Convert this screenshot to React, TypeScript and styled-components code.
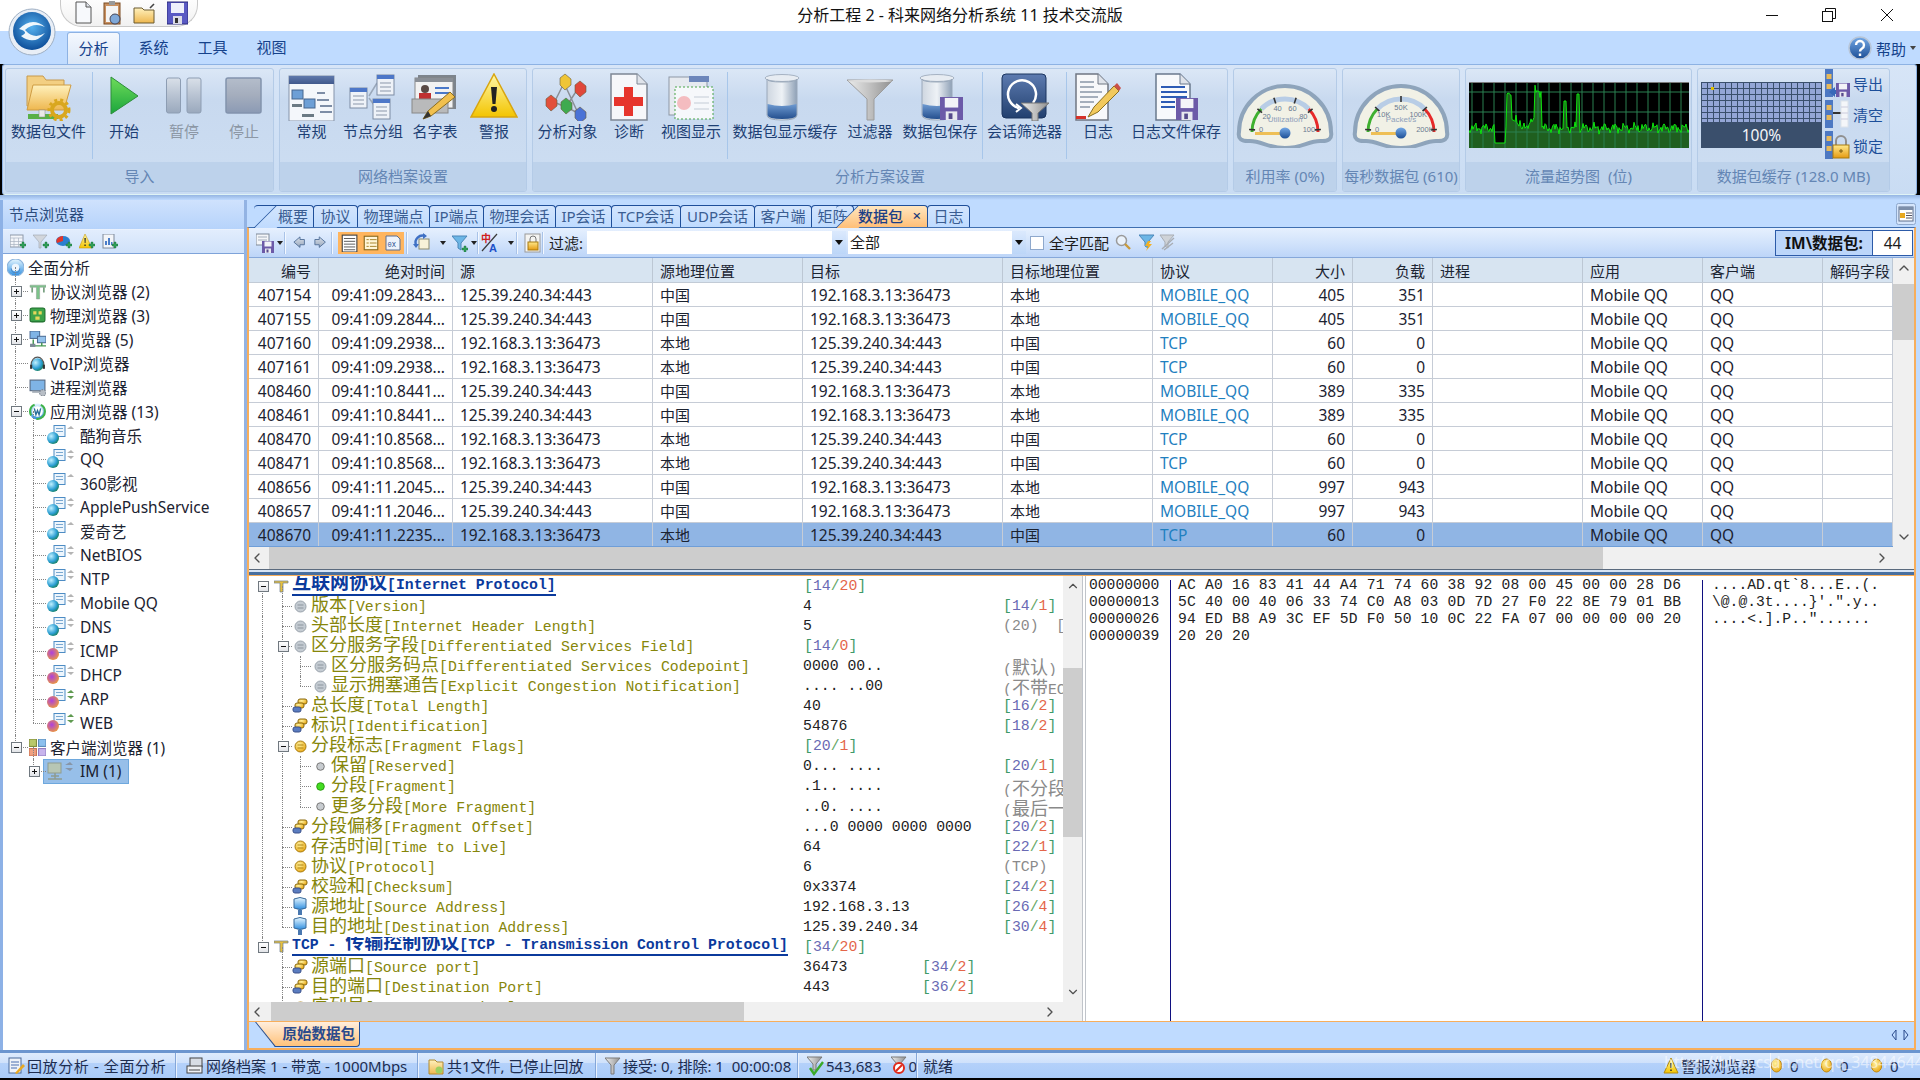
import React from 'react';
import styled, { createGlobalStyle } from 'styled-components';
import { ChevronLeft, ChevronRight, ChevronUp, ChevronDown } from 'lucide-react';

const GlobalStyle = createGlobalStyle`
  html, body { margin: 0; padding: 0; width: 1920px; height: 1080px; overflow: hidden; background: #000; }
  body { font-family: "Noto Sans", "Noto Sans CJK SC", sans-serif; font-size: 15px; color: #1c1c1c; }
  #root { width: 1920px; height: 1080px; }
  svg { display: block; flex: none; }
`;

/* ---------- shared svg gradients ---------- */
const HiddenDefs = styled.svg`position: absolute; width: 0; height: 0;`;
const Grad = ({ id, a, b, c, h }: { id: string; a: string; b: string; c?: string; h?: boolean }) => (
  <linearGradient id={id} x1="0" y1="0" x2={h ? '1' : '0'} y2={h ? '0' : '1'}>
    <stop offset="0" stopColor={a} />
    {c && <stop offset="0.5" stopColor={c} />}
    <stop offset="1" stopColor={b} />
  </linearGradient>
);
const SharedDefs = () => (
  <HiddenDefs>
    <defs>
      <Grad id="gFolder" a="#fff1bd" b="#eeb74f" />
      <Grad id="gGreen" a="#6fdc5a" b="#1aa53c" />
      <Grad id="gGray" a="#d9e0e9" b="#9aa9bd" c="#b8c3d2" />
      <Grad id="gStop" a="#b4bdcb" b="#8b9ab4" c="#a4adbd" />
      <Grad id="gBar" a="#5f79ac" b="#41598c" />
      <Grad id="gGlass" a="#ced6e0" b="#8ea0b6" c="#eef2f6" h />
      <Grad id="gWater" a="#6f9bd2" b="#244f8e" />
      <Grad id="gFunnel" a="#eceded" b="#8f8f8f" c="#c0c0c0" h />
      <Grad id="gGold" a="#ffe98a" b="#e59a12" />
      <Grad id="gWarn" a="#fff8a8" b="#f3c400" />
      <Grad id="gNavy" a="#5d7bb0" b="#22406f" />
      <Grad id="gSky" a="#e6f7ff" b="#2f8ee0" />
      <Grad id="gKnob" a="#73a8e6" b="#1d4f96" />
      <radialGradient id="gLogo" cx="0.5" cy="0.4" r="0.6">
        <stop offset="0" stopColor="#55b0ee" />
        <stop offset="1" stopColor="#0e4f9a" />
      </radialGradient>
      <radialGradient id="gGlobe" cx="0.35" cy="0.35" r="0.75">
        <stop offset="0" stopColor="#bff0ff" />
        <stop offset="0.6" stopColor="#2d9fd4" />
        <stop offset="1" stopColor="#137a4c" />
      </radialGradient>
      <radialGradient id="gPurple" cx="0.4" cy="0.4" r="0.7">
        <stop offset="0" stopColor="#ad3fe0" />
        <stop offset="1" stopColor="#f0a030" />
      </radialGradient>
      <radialGradient id="gCoin" cx="0.4" cy="0.35" r="0.7">
        <stop offset="0" stopColor="#fff3a0" />
        <stop offset="1" stopColor="#e8a510" />
      </radialGradient>
    </defs>
  </HiddenDefs>
);

type SP = { s?: number };
const Big = ({ children }: { children: React.ReactNode }) => (
  <svg width="48" height="48" viewBox="0 0 48 48">{children}</svg>
);

/* ---------- ribbon icons ---------- */
const Floppy = ({ x, y, s }: { x: number; y: number; s: number }) => (
  <g transform={`translate(${x} ${y}) scale(${s / 24})`}>
    <rect width="24" height="24" fill="#6c5aa8" />
    <rect x="5" y="1" width="14" height="10" fill="#f3f3f8" />
    <rect x="6" y="15" width="12" height="9" fill="#e8e8ef" />
    <rect x="9" y="17" width="4" height="6" fill="#564a8c" />
  </g>
);
const FolderGearIcon = () => (
  <Big>
    <path d="M2 3h16l3 4h18v26H2z" fill="#f3cf82" stroke="#c79a4c" />
    <path d="M8 12h38l-7 25H2z" fill="url(#gFolder)" stroke="#cf9c42" />
    <rect x="3" y="41" width="30" height="5" fill="#58b048" />
    <rect x="14" y="37" width="6" height="7" fill="#e9e9e9" stroke="#888" strokeWidth=".5" />
    <circle cx="34" cy="37" r="7" fill="none" stroke="#d9a71e" strokeWidth="4" />
    <circle cx="34" cy="37" r="10" fill="none" stroke="#d9a71e" strokeWidth="3" strokeDasharray="3 3" />
  </Big>
);
const PlayIcon = () => <Big><path d="M11 4L38 23L11 41Z" fill="url(#gGreen)" stroke="#2c8d3a" /></Big>;
const PauseIcon = () => (
  <Big>
    <rect x="6.5" y="5" width="14" height="35" rx="2" fill="url(#gGray)" stroke="#8d9db3" />
    <rect x="27" y="5" width="14" height="35" rx="2" fill="url(#gGray)" stroke="#8d9db3" />
  </Big>
);
const StopIcon = () => <Big><rect x="6" y="5" width="35" height="35" rx="2" fill="url(#gStop)" stroke="#8293ad" strokeWidth="1.5" /></Big>;
const GeneralIcon = () => (
  <Big>
    <rect x="1" y="3" width="45" height="45" fill="#f4f7fb" stroke="#8593aa" />
    <rect x="1" y="3" width="45" height="8" fill="url(#gBar)" />
    <rect x="4" y="17" width="11" height="9" fill="#6d9fd6" stroke="#47668f" />
    <rect x="16" y="26" width="11" height="9" fill="#6d9fd6" stroke="#47668f" />
    <rect x="4" y="31" width="10" height="3" fill="#6b7a84" />
    <rect x="14" y="41" width="12" height="3" fill="#6b7a84" />
    <path d="M29 20h8M29 27h12M32 33h12M32 39h12" stroke="#7d8da6" strokeWidth="2" />
  </Big>
);
const MiniWin = ({ x, y }: { x: number; y: number }) => (
  <g>
    <rect x={x} y={y} width="17" height="20" fill="#eef2f8" stroke="#7d8ca4" />
    <rect x={x} y={y} width="17" height="4" fill="#4d77c8" />
    <path d={`M${x + 3} ${y + 8}h11M${x + 3} ${y + 12}h11M${x + 3} ${y + 16}h11`} stroke="#8b97aa" />
  </g>
);
const NodeGroupIcon = () => (
  <Big>
    <path d="M20 23L28 10M20 25L28 36" stroke="#9aa8ba" strokeWidth="1.5" />
    <MiniWin x={1} y={15} />
    <MiniWin x={28} y={2} />
    <MiniWin x={24} y={26} />
  </Big>
);
const NameTableIcon = () => (
  <Big>
    <rect x="7" y="2" width="38" height="34" fill="#7d848c" />
    <rect x="4" y="5" width="38" height="30" fill="#f2f2f2" stroke="#888" />
    <rect x="4" y="5" width="38" height="4" fill="#8a8f96" />
    <circle cx="14" cy="16" r="4" fill="#5a4a44" />
    <rect x="8" y="20" width="12" height="9" fill="#c03030" />
    <path d="M24 15h14M24 20h14" stroke="#4a78c8" strokeWidth="2" />
    <rect x="1" y="26" width="36" height="14" fill="#b9babb" stroke="#888" />
    <path d="M12 46L17 38L39 19L44 24L20 43Z" fill="#f1c04e" stroke="#8a6d20" />
    <path d="M12 46l5-8 3 5z" fill="#333" />
  </Big>
);
const WarnIcon = () => (
  <Big>
    <path d="M24 1L47 44H1Z" fill="url(#gWarn)" stroke="#d8a510" strokeWidth="1.5" />
    <path d="M21 14h6l-1.5 17h-3z" fill="#222" />
    <circle cx="24" cy="36" r="3" fill="#222" />
  </Big>
);
const Gem = ({ x, y, c }: { x: number; y: number; c: string }) => (
  <path d={`M${x - 5} ${y - 4}L${x} ${y - 8}L${x + 6} ${y - 3}L${x + 6} ${y + 3}L${x} ${y + 8}L${x - 5} ${y + 3}Z`} fill={c} stroke="#6a5a3a" strokeWidth=".6" />
);
const AnalyzeIcon = () => (
  <Big>
    <path d="M20 10L10 30M20 10L34 40M35 14L22 34L12 30M22 34L34 40" stroke="#8a8f96" strokeWidth="1.5" fill="none" />
    <Gem x={21} y={9} c="#efc536" />
    <Gem x={36} y={16} c="#e0473a" />
    <Gem x={7} y={30} c="#e2503c" />
    <Gem x={22} y={33} c="#3faa4f" />
    <Gem x={36} y={42} c="#4a72d6" />
  </Big>
);
const DiagnoseIcon = () => (
  <Big>
    <path d="M6 1h26l10 10v36H6z" fill="#f6f7fa" stroke="#7e8794" strokeWidth="1.5" />
    <path d="M32 1v10h10" fill="#dfe3ea" stroke="#7e8794" />
    <path d="M19 14h9v10h10v9H28v10h-9V33H9v-9h10z" fill="#e6352d" />
  </Big>
);
const ViewIcon = () => (
  <Big>
    <rect x="2" y="4" width="38" height="38" fill="#e6eaf0" stroke="#8d97a5" />
    <rect x="22" y="3" width="20" height="6" fill="#6c86bb" />
    <rect x="8" y="14" width="38" height="32" fill="#f6f8fb" stroke="#48a448" strokeDasharray="2 2" />
    <circle cx="17" cy="30" r="7" fill="#f4bcc0" />
    <path d="M27 24h15M27 30h15M27 36h15" stroke="#c4ccd6" />
  </Big>
);
const BeakerIcon = ({ save }: { save?: boolean }) => (
  <Big>
    <ellipse cx="21" cy="5" rx="17" ry="3.5" fill="#e7ecf2" stroke="#a6b3c3" />
    <path d="M6 6V42Q6 47 21 47T36 42V6Q36 9 21 9T6 6" fill="url(#gGlass)" stroke="#9aa8ba" />
    <path d="M6.5 31Q21 35 35.5 31V42Q35 46 21 46T6.5 42Z" fill="url(#gWater)" />
    {save && <Floppy x={24} y={24} s={23} />}
  </Big>
);
const FunnelIcon = () => (
  <Big>
    <path d="M1 7H47L28 26V47H21V26Z" fill="url(#gFunnel)" stroke="#9c9c9c" />
    <ellipse cx="24" cy="8" rx="22" ry="1.5" fill="#dcdcdc" />
  </Big>
);
const SessionIcon = () => (
  <Big>
    <rect x="1" y="1" width="44" height="44" rx="4" fill="url(#gNavy)" stroke="#1a345f" />
    <path d="M32 30A14 14 0 1 0 18 35" fill="none" stroke="#fff" strokeWidth="2.5" />
    <path d="M15 31l5 4-5 4" fill="none" stroke="#fff" strokeWidth="2" />
    <path d="M20 30H48L37 40V48H31V40Z" fill="url(#gFunnel)" stroke="#777" />
  </Big>
);
const LogIcon = () => (
  <Big>
    <path d="M2 1h22l10 10v36H2z" fill="#f7f8fa" stroke="#6f7682" strokeWidth="1.5" />
    <path d="M24 1v10h10" fill="#dfe3ea" stroke="#6f7682" />
    <path d="M6 9h14M6 14h14M6 19h22M6 24h18M6 29h14M6 34h10" stroke="#8a97a8" strokeWidth="1.6" />
    <rect x="2" y="43" width="10" height="3" fill="#d6322a" />
    <path d="M14 44L20 34L40 13L45 18L24 39Z" fill="#f2c95c" stroke="#8a7020" />
    <path d="M40 13l5 5 2-3-4-5z" fill="#c9504a" />
  </Big>
);
const LogSaveIcon = () => (
  <Big>
    <path d="M4 1h24l10 10v36H4z" fill="#f7f9fc" stroke="#69788d" strokeWidth="1.5" />
    <path d="M28 1v10h10" fill="#dfe3ea" stroke="#69788d" />
    <path d="M9 14h24M9 19h26M9 24h26M9 29h14M9 34h14" stroke="#2d5bb5" strokeWidth="2" />
    <Floppy x={24} y={25} s={22} />
  </Big>
);

/* ---------- small icons ---------- */
const Sm = ({ s = 16, children }: SP & { children: React.ReactNode }) => (
  <svg width={s} height={s} viewBox="0 0 16 16">{children}</svg>
);
const Plus = () => <path d="M10 10h2V8h2v2h2v2h-2v2h-2v-2h-2z" fill="#2f9e58" stroke="#1b6a3a" strokeWidth=".4" />;
const TableAddIcon = () => <Sm><rect x="0" y="1" width="13" height="12" fill="#f4f6fa" stroke="#8c97a8" /><path d="M0 4h13M0 7.5h13M0 10.5h13M4 4v9M8.5 4v9" stroke="#a8b2c0" strokeWidth=".7" /><Plus /></Sm>;
const FilterAddIcon = () => <Sm><path d="M0 1H14L8 8V14H6V8Z" fill="#d2d6dc" stroke="#9aa2ac" strokeWidth=".6" /><Plus /></Sm>;
const PieAddIcon = () => <Sm><ellipse cx="7" cy="7" rx="7" ry="5" fill="#2b7fd0" /><path d="M7 7V2A7 5 0 0 0 1 9Z" fill="#e2352a" /><Plus /></Sm>;
const WarnAddIcon = () => <Sm><path d="M6 0L13 14H0Z" fill="url(#gWarn)" stroke="#c79a10" strokeWidth=".6" /><path d="M5.4 4h1.4l-.3 5h-.8zM5.4 10.5h1.3v1.5H5.4z" fill="#222" /><Plus /></Sm>;
const ReportAddIcon = () => <Sm><rect x="1" y="0" width="11" height="14" fill="#f3f5f9" stroke="#7e8a9c" /><path d="M3 11V7h2v4zM6 11V4h2v7zM9 11V8h1.5v3z" fill="#4a7cc8" /><Plus /></Sm>;

const SaveMenuIcon = () => <svg width="18" height="20" viewBox="0 0 18 20"><rect x="0" y="1" width="13" height="11" fill="#f4f6f9" stroke="#7f8a99" /><path d="M2 4h9M2 7h9" stroke="#a3adba" /><Floppy x={6} y={8} s={12} /></svg>;
const ArrowLeftIcon = () => <Sm s={14}><path d="M1 7L8 1v3h5v6H8v3z" fill="url(#gGray)" stroke="#4d6b95" /></Sm>;
const ArrowRightIcon = () => <Sm s={14}><path d="M13 7L6 1v3H1v6h5v3z" fill="url(#gGray)" stroke="#4d6b95" /></Sm>;
const ListViewIcon = () => <Sm s={18}><rect x="2" y="1" width="13" height="15" fill="#fff" stroke="#444" /><path d="M3.5 4h10M3.5 6.5h10M3.5 9h10M3.5 11.5h10M3.5 14h10" stroke="#333" strokeWidth=".7" /></Sm>;
const DetailViewIcon = () => <Sm s={18}><rect x="2" y="2" width="12" height="12" fill="#fff6d8" stroke="#8a6a20" /><path d="M7 5h6M7 8h6M7 11h6M4 5h2M4 8h2M4 11h2" stroke="#a07c20" strokeWidth=".8" /></Sm>;
const HexViewIcon = () => <svg width="18" height="18" viewBox="0 0 18 18"><path d="M2 2h11l3 3v11H2z" fill="#eef3fb" stroke="#5a6f92" /><text x="3.5" y="12.5" fontSize="7" fontFamily="Liberation Mono" fill="#2a4f90">0X</text></svg>;
const SwapIcon = () => <svg width="20" height="20" viewBox="0 0 20 20"><rect x="6" y="6" width="10" height="10" fill="#f8f2d8" stroke="#8a8a70" /><path d="M3 12A7 7 0 0 1 12 3" stroke="#3f70c4" strokeWidth="2.4" fill="none" /><path d="M10 0l4 3-4 3zM0 11l3 4 3-4z" fill="#3f70c4" /></svg>;
const FilterBlueIcon = () => <svg width="16" height="18" viewBox="0 0 16 18"><path d="M0 2H15L9 9V16L6 14V9Z" fill="#6cb6e6" stroke="#4a86b8" /><g transform="translate(0 4)"><Plus /></g></svg>;
const LangIcon = () => <svg width="20" height="20" viewBox="0 0 20 20"><path d="M2 18L17 1" stroke="#3a3a3a" strokeWidth="1.2" /><text x="1" y="9" fontSize="10" fontWeight="700" fill="#d02020" fontFamily="Noto Sans CJK SC">中</text><text x="9" y="19" fontSize="11" fontWeight="700" fill="#2050c8" fontFamily="Liberation Sans">A</text></svg>;
const LockIcon = () => <svg width="18" height="20" viewBox="0 0 18 20"><rect x="1" y="1" width="15" height="18" fill="#f4f4f2" stroke="#9a9a9a" /><path d="M6 9V6a3 3 0 0 1 6 0v3" fill="none" stroke="#777" /><rect x="4" y="9" width="10" height="8" fill="url(#gGold)" stroke="#a87a10" /></svg>;
const SearchIcon = () => <svg width="17" height="17" viewBox="0 0 17 17"><circle cx="6.5" cy="6.5" r="5" fill="#eaf2fb" stroke="#9a9a9a" strokeWidth="1.5" /><path d="M10 10l5 5" stroke="#c99a3a" strokeWidth="2.4" /></svg>;
const FilterBoltIcon = () => <svg width="16" height="17" viewBox="0 0 16 17"><path d="M0 1H15L9 8V14L6 12V8Z" fill="#6cb6e6" stroke="#4a86b8" /><path d="M9 7L6 12h3l-2 5 6-7h-3l2-3z" fill="#f2b024" /></svg>;
const FilterOffIcon = () => <svg width="16" height="17" viewBox="0 0 16 17"><path d="M1 1H15L9 8V14L6 12V8Z" fill="#cfd3d8" stroke="#a8adb4" /><path d="M3 15L15 4M5 16l9-7" stroke="#a8adb4" strokeWidth="1.4" /></svg>;
const PanelIcon = () => <svg width="20" height="22" viewBox="0 0 20 22"><rect x=".5" y=".5" width="19" height="21" rx="2" fill="#d5e5fb" stroke="#8ea8cc" /><rect x="3" y="4" width="14" height="14" fill="#fff" stroke="#5d6f8c" /><rect x="3" y="4" width="14" height="3" fill="#7d8faa" /><rect x="4" y="10" width="5" height="5" fill="#e8a820" /><path d="M10 10h6M10 12.5h6M10 15h6" stroke="#556" /></svg>;
const ExportIcon = ({ v }: { v: 'export' | 'clear' | 'lock' }) => (
  <svg width="25" height="30" viewBox="0 0 25 30">
    <rect x="0" y="1" width="8" height="28" fill="#4d78c2" />
    <rect x="1.5" y="6" width="5" height="5" fill="#e6b85a" />
    <rect x="1.5" y="16" width="5" height="5" fill="#e6b85a" />
    {v === 'export' && <><path d="M4 24l6-5v3h4v4h-4v3z" fill="#3868b8" /><Floppy x={11} y={15} s={14} /></>}
    {v === 'clear' && <><path d="M8 14h8" stroke="#333" strokeWidth="2" /><rect x="16" y="2" width="7" height="26" fill="#f4f6f9" stroke="#dde3ea" /><path d="M16 8h7M16 14h7M16 20h7" stroke="#ccd" /></>}
    {v === 'lock' && <><path d="M11 15v-4a5 5 0 0 1 10 0v4" fill="none" stroke="#909090" strokeWidth="2" /><rect x="8" y="15" width="16" height="13" fill="url(#gGold)" stroke="#a87a10" /><path d="M14 21h4M16 19v4" stroke="#7a5a10" /></>}
  </svg>
);

/* ---------- tree icons ---------- */
const ProtoTreeIcon = () => <Sm s={17}><path d="M1 2h15v2H10v11H7V4H1z" fill="#7cc48a" stroke="#8e9c92" strokeWidth=".5" /><path d="M3 4v5M14 4v5" stroke="#78a080" strokeWidth="1.6" /></Sm>;
const PhysTreeIcon = () => <Sm s={17}><rect x="1" y="1" width="14" height="13" rx="2" fill="#3da24a" stroke="#1e6e2c" /><path d="M4 4h3v3H4zM9 4h3v3H9zM6 9h4v3H6z" fill="#e6d65a" /></Sm>;
const IPTreeIcon = () => <Sm s={17}><rect x="1" y="0" width="9" height="7" fill="#7fb4e6" stroke="#4d6e98" /><rect x="8" y="5" width="8" height="6" fill="#94c2ec" stroke="#4d6e98" /><path d="M1 14h15M4 8v6M12 11v3" stroke="#4a9a56" strokeWidth="1.4" /><rect x="1" y="12" width="5" height="3" fill="#7d8a96" /></Sm>;
const VoipTreeIcon = () => <Sm s={17}><circle cx="8" cy="9" r="6" fill="url(#gGlobe)" /><path d="M2 9a6 7 0 0 1 12 0" fill="none" stroke="#555" /><rect x="1" y="9" width="2" height="4" fill="#333" /><rect x="13" y="9" width="2" height="4" fill="#333" /></Sm>;
const ProcTreeIcon = () => <Sm s={17}><rect x="1" y="1" width="14" height="10" fill="#7fb4e6" stroke="#55677f" /><rect x="3" y="11" width="8" height="2" fill="#a3acb6" /><circle cx="13" cy="13" r="3" fill="#b8bec6" stroke="#7e8792" strokeDasharray="1.5 1" /></Sm>;
const AppRootIcon = () => <Sm s={17}><circle cx="8" cy="8" r="7.5" fill="url(#gSky)" /><circle cx="8" cy="8" r="5" fill="#fff" /><circle cx="8" cy="8" r="7" fill="none" stroke="#3fb24a" strokeWidth="2" strokeDasharray="12 6" /><path d="M5 5l1.5 6L8 7l1.5 4L11 5" fill="none" stroke="#2a6d9a" strokeWidth="1.3" /></Sm>;
const RootIcon = () => <Sm s={17}><circle cx="8" cy="8" r="8" fill="url(#gSky)" stroke="#8db4dc" /><circle cx="8" cy="8" r="3.5" fill="#eef6fd" /><path d="M4 9a4 4 0 0 0 8 0" fill="none" stroke="#4a88c8" /></Sm>;
const AppNodeIcon = ({ purple, green, faded }: { purple?: boolean; green?: boolean; faded?: boolean }) => (
  <svg width="28" height="20" viewBox="0 0 28 20">
    <rect x="7" y="0.5" width="11" height="11" fill="#eef6fd" stroke="#4d8cc4" />
    <path d="M9 3.5h7M9 6.5h7" stroke="#7aa8d0" />
    <circle cx="6" cy="13" r="6" fill={purple ? 'url(#gPurple)' : 'url(#gGlobe)'} />
    <path d="M20 4h7l-3-3z" fill={green ? '#5f9a50' : '#b4b4b4'} />
    {!faded && <path d="M20 7h7l-3 3z" fill={green ? '#5f9a50' : '#b4b4b4'} />}
  </svg>
);
const ClientTreeIcon = () => <Sm s={17}><rect x="0" y="0" width="7" height="7" fill="#b9c86a" stroke="#7f8a3a" /><rect x="9" y="0" width="7" height="7" fill="#8cc0ee" stroke="#5a8ab8" /><rect x="0" y="9" width="7" height="7" fill="#f0a080" stroke="#c87050" /><rect x="9" y="9" width="7" height="7" fill="#c8b4ec" stroke="#8f7cc0" /></Sm>;
const IMTreeIcon = () => (
  <svg width="28" height="20" viewBox="0 0 28 20">
    <rect x="1" y="2" width="13" height="10" fill="#b7c6b4" stroke="#8f9c8f" />
    <path d="M4 15h8M1 18h14M8 12v6" stroke="#8f9c8f" strokeWidth="1.5" />
    <path d="M18 4h8l-3-3zM18 7h8l-3 3z" fill="#8795a8" />
  </svg>
);

/* ---------- detail icons ---------- */
const TreeTIcon = () => <svg width="15" height="15" viewBox="0 0 15 15"><path d="M0 2h14v2H9v9H6V4H0z" fill="#e6c040" stroke="#6a7c8e" strokeWidth=".7" /></svg>;
const DocCoinIcon = () => <svg width="13" height="13" viewBox="0 0 13 13"><circle cx="6.5" cy="6.5" r="5.5" fill="#c4cbd2" stroke="#9aa3ac" /><path d="M3.5 5h6M3.5 8h6" stroke="#8c959e" /></svg>;
const GoldCoinIcon = () => <svg width="13" height="13" viewBox="0 0 13 13"><circle cx="6.5" cy="6.5" r="5.5" fill="url(#gCoin)" stroke="#a87c10" /><path d="M3.5 5h6M3.5 8h6" stroke="#b08410" /></svg>;
const CoinStackIcon = () => <svg width="16" height="16" viewBox="0 0 16 16"><rect x="6" y="1" width="9" height="5" rx="2" fill="url(#gCoin)" stroke="#8a6a10" /><rect x="3" y="5" width="9" height="5" rx="2" fill="url(#gCoin)" stroke="#8a6a10" /><rect x="1" y="9" width="8" height="5" rx="2" fill="#5a7cc0" stroke="#3a508a" /></svg>;
const BitIcon = ({ on }: { on?: boolean }) => <svg width="9" height="9" viewBox="0 0 9 9"><circle cx="4.5" cy="4.5" r="3.8" fill={on ? '#44dd22' : '#c8ccd0'} stroke={on ? '#2a9a10' : '#777'} /></svg>;
const AddrIcon = () => <svg width="14" height="20" viewBox="0 0 14 20"><path d="M1 2Q7-1 13 2V11Q7 14 1 11Z" fill="url(#gSky)" stroke="#3a6a9a" /><path d="M5 13h4v5H5z" fill="#4a78b0" /></svg>;

/* ---------- window / ribbon ---------- */
const Frame = styled.div`
  position: relative; width: 1920px; height: 1080px; overflow: hidden;
  display: flex; flex-direction: column; background: #000;
`;
const TitleBar = styled.div`
  height: 31px; background: #fff; display: grid; grid-template-columns: 1fr auto 1fr; align-items: start;
`;
const QuickBar = styled.div`
  margin-left: 60px; width: 138px; height: 27px; box-sizing: border-box; padding-left: 12px;
  display: flex; align-items: center; gap: 10px; background: linear-gradient(#fdfdfd, #f1f1f1);
  border: 1px solid #c9c9c9; border-top: 0; border-radius: 0 0 22px 22px;
`;
const TitleText = styled.div`font-size: 16px; line-height: 31px; color: #111;`;
const WinButtons = styled.div`display: flex; justify-content: flex-end; padding: 8px 26px 0 0; gap: 44px;`;
const LogoWrap = styled.div`position: absolute; left: 8px; top: 8px; z-index: 5;`;

const MenuBar = styled.div`
  height: 33px; padding-left: 67px; display: flex; align-items: flex-end; background: #bfdbff; position: relative;
`;
const MenuTab = styled.div<{ $active?: boolean }>`
  width: ${p => (p.$active ? '53px' : '59px')};
  margin-right: ${p => (p.$active ? '4px' : '0')};
  height: 32px; line-height: 31px; text-align: center; color: #15428b; font-size: 15px; box-sizing: border-box;
  ${p => p.$active && `background: linear-gradient(#f4f8fe, #dbe7f7); border: 1px solid #8db2e3; border-bottom: 0; border-radius: 3px 3px 0 0;`}
`;
const HelpBox = styled.div`
  margin-left: auto; display: flex; align-items: center; gap: 4px; padding-right: 4px; height: 32px;
  color: #15428b; font-size: 15px;
`;
const Caret = styled.span`
  width: 0; height: 0; border: 3px solid transparent; border-top: 4px solid #444; border-bottom: 0; display: block;
`;

const Ribbon = styled.div`
  height: 131px; box-sizing: border-box; margin: 0 3px 0 2px; padding: 3px 0 0 2px; display: flex; gap: 5px;
  background: linear-gradient(#d7e5f7, #c9dcf3); border: 1px solid #8db2e3; border-bottom-color: #dff3f5; border-radius: 3px;
`;
const RGroup = styled.div<{ $w: number }>`
  width: ${p => p.$w}px; height: 124px; box-sizing: border-box; flex: none; display: flex; flex-direction: column;
  border: 1px solid #b4cbe7; border-radius: 3px; overflow: hidden;
  background: linear-gradient(#dbe7f6 0, #c8d9ef 25%, #cddef2 100%);
`;
const RBody = styled.div`flex: 1; display: flex; min-height: 0;`;
const RLabel = styled.div`
  height: 29px; line-height: 28px; text-align: center; color: #6486b4; font-size: 15px; white-space: nowrap; background: #bdd2eb;
`;
const RItem = styled.div<{ $w: number }>`
  width: ${p => p.$w}px; flex: none; display: flex; flex-direction: column; align-items: center; padding-top: 4px;
`;
const RText = styled.div<{ $off?: boolean }>`
  margin-top: 1px; line-height: 18px; white-space: nowrap; font-size: 15px; color: ${p => (p.$off ? '#8c97a5' : '#1d3f74')};
`;
const RSep = styled.div`width: 1px; margin: 3px 1px 3px; background: #a7c6ea; flex: none;`;
const GaugeBox = styled.div`flex: 1; display: flex; align-items: flex-start; justify-content: center; padding-top: 13px;`;
const ChartBox = styled.div`padding: 13px 0 0 3px;`;
const BufferBody = styled.div`display: flex; padding: 13px 0 0 3px;`;
const BufferMap = styled.div`
  position: relative; width: 121px; height: 66px; background: #3a4f6c; overflow: hidden; flex: none;
  &::before {
    content: ''; display: block; height: 40px;
    background-image: linear-gradient(#3a4f6c 1px, transparent 1px), linear-gradient(90deg, #3a4f6c 1px, transparent 1px);
    background-size: 6px 6px; background-color: #94a6d6;
  }
  &::after { content: ''; position: absolute; left: 10px; top: 5px; width: 3px; height: 3px; background: #e0c000; }
`;
const BufferPct = styled.div`height: 26px; line-height: 26px; text-align: center; color: #f4f6fa; font-size: 15.5px;`;
const SideBtns = styled.div`display: flex; flex-direction: column; margin: -14px 0 0 3px; gap: 1px;`;
const SideBtn = styled.div`display: flex; align-items: center; gap: 3px; height: 30px; color: #1d4f9a; font-size: 15px;`;

/* ---------- body ---------- */
const Body = styled.div`
  height: 858px; box-sizing: border-box; display: flex; background: linear-gradient(#95b5e2, #bfdbff 5px);
  padding-top: 5px; border-bottom: 3px solid #6b95cf;
`;
const LeftPane = styled.div`
  width: 244px; flex: none; box-sizing: border-box; border-left: 3px solid #8db1e6; display: flex; flex-direction: column;
`;
const PaneHead = styled.div`
  height: 29px; line-height: 29px; padding-left: 6px; color: #2b4b7c; font-size: 15px;
  background: linear-gradient(#cfe2fd, #b6d3fb);
`;
const PaneTools = styled.div`
  height: 25px; box-sizing: border-box; display: flex; align-items: center; gap: 7px; padding-left: 7px;
  background: linear-gradient(#e2edfd, #cfe1fa); border-top: 1px solid #eaf2fe; border-bottom: 1px solid #7ea3d9;
`;
const Tree = styled.div`flex: 1; background: #fff; padding-top: 1px; overflow: hidden;`;
const TreeRow = styled.div<{ $pad: number }>`
  position: relative; height: 24px; padding-left: ${p => p.$pad}px; display: flex; align-items: center;
  font-size: 15.5px; color: #1b2230; white-space: nowrap;
`;
const Rail = styled.i<{ $x: number; $part?: 'top' | 'bottom' }>`
  position: absolute; left: ${p => p.$x}px; width: 0; border-left: 1px dotted #858585;
  top: ${p => (p.$part === 'bottom' ? '50%' : '0')}; height: ${p => (p.$part ? '50%' : '100%')};
`;
const Hook = styled.i<{ $x: number; $w: number }>`
  position: absolute; left: ${p => p.$x}px; width: ${p => p.$w}px; top: 50%; height: 0; border-top: 1px dotted #858585;
`;
const Expander = styled.i<{ $x: number; $open?: boolean }>`
  position: absolute; left: ${p => p.$x - 4}px; top: calc(50% - 5px); width: 9px; height: 9px; background: linear-gradient(#fff, #e2e4e8);
  border: 1px solid #70787f; box-sizing: content-box; z-index: 1;
  &::before { content: ''; position: absolute; left: 2px; right: 2px; top: 4px; height: 1px; background: #111; }
  ${p => !p.$open && `&::after { content: ''; position: absolute; top: 2px; bottom: 2px; left: 4px; width: 1px; background: #111; }`}
`;
const TreeIconSlot = styled.span<{ $w: number }>`width: ${p => p.$w}px; flex: none; display: flex; align-items: center;`;
const TreeSelected = styled.span`
  display: flex; align-items: center; height: 25px; padding: 0 6px 0 3px; margin-left: -4px;
  background: #97bfe9; border: 1px solid #6ea8dd; box-sizing: border-box;
`;
const VSplit = styled.div`width: 3px; background: #93b3e3; flex: none;`;
const RightPane = styled.div`flex: 1; min-width: 0; padding-right: 4px; display: flex; flex-direction: column;`;
const TabStrip = styled.div`height: 27px; flex: none; box-sizing: border-box; padding: 5px 0 0 7px; display: flex; position: relative;`;
const ViewTab = styled.div<{ $w: number; $slant?: boolean; $active?: boolean }>`
  position: relative; flex: none; width: ${p => p.$w}px; height: 22px; line-height: 20px; box-sizing: border-box;
  font-size: 15px; font-weight: ${p => (p.$active ? 500 : 400)}; color: ${p => (p.$active ? '#1c3f86' : '#3a5d92')};
  text-align: ${p => (p.$slant ? 'right' : 'center')}; white-space: nowrap; overflow: ${p => (p.$slant ? 'visible' : 'hidden')};
  padding-right: ${p => (p.$active ? '24px' : p.$slant ? '5px' : '0')};
  background: ${p => (p.$active ? 'linear-gradient(#ffe6bf, #ffbf78)' : 'linear-gradient(#d3e5fd, #bfdbff)')};
  border: 1px solid #1f4f9a; border-bottom: 0; border-radius: 4px 4px 0 0;
  z-index: ${p => (p.$active ? 2 : 1)};
  margin-left: ${p => (p.$active ? '-18px' : p.$slant ? '0' : '-1px')};
  ${p => p.$slant && `
    border-left: 0; background-position: right; background-size: calc(100% - 22px) 100%; background-repeat: no-repeat;
    &::before {
      content: ''; position: absolute; left: 11px; top: -1px; width: 22px; height: 22px;
      background: ${p.$active ? 'linear-gradient(#ffe6bf, #ffbf78)' : 'linear-gradient(#d3e5fd, #bfdbff)'};
      border-left: 1px solid #1f4f9a; border-top: 1px solid #1f4f9a;
      transform: skewX(-45deg); z-index: -1;
    }
  `}
`;
const TabClose = styled.span`position: absolute; right: 6px; top: -1px; font-size: 15px; color: #1a3a7a;`;
const StripEnd = styled.div`position: absolute; right: 0; top: 3px;`;
const Panel = styled.div`
  height: 823px; flex: none; box-sizing: border-box; display: flex; flex-direction: column; background: #fff;
  border: 2px solid #f7ae5c; border-top: 1px solid #3f6fb0;
`;
const Toolbar = styled.div`
  height: 30px; flex: none; box-sizing: border-box; display: flex; align-items: center; position: relative;
  background: linear-gradient(#e6f0fe, #d0e2fb 55%, #bdd5f8); border-bottom: 1px solid #86a8da;
`;
const Tool = styled.span<{ $ml: number }>`margin-left: ${p => p.$ml}px; flex: none; display: flex; align-items: center;`;
const ToolSep = styled.span<{ $ml: number }>`margin-left: ${p => p.$ml}px; width: 1px; height: 22px; background: #f3f8ff; box-shadow: -1px 0 #a9c3e8; flex: none;`;
const OrangeGroup = styled.span`
  margin-left: 5px; width: 66px; height: 22px; display: flex; justify-content: space-around; align-items: center; background: #ffb55e; flex: none;
`;
const ToolCaret = styled(Caret)`margin-left: 3px; border-top-color: #222; border-width: 3px; border-top-width: 4px;`;
const FilterLabel = styled.span`margin-left: 5px; font-size: 15px; width: 38px; flex: none;`;
const Combo = styled.div<{ $w: number }>`
  width: ${p => p.$w}px; height: 23px; background: #fff; display: flex; flex: none; margin-right: 2px;
  font-size: 15px; line-height: 22px; padding-left: 2px; box-sizing: border-box;
`;
const ComboText = styled.span`flex: 1;`;
const ComboBtn = styled.span`width: 14px; background: linear-gradient(#dbe9fd, #bcd6f8); display: flex; align-items: center; justify-content: center;`;
const ComboCaret = styled(Caret)`border-width: 4px; border-top-width: 5px; border-top-color: #111;`;
const CheckBox = styled.span`width: 12px; height: 12px; border: 1px solid #8ea8cc; background: #fff; margin-left: 2px; flex: none;`;
const WordLabel = styled.span`margin-left: 5px; width: 60px; font-size: 15px; flex: none; white-space: nowrap;`;
const CountBox = styled.div`
  position: absolute; right: 1px; top: 2px; width: 138px; height: 26px; box-sizing: border-box; display: flex;
  border: 1px solid #2d5ba8; font-size: 15.5px;
`;
const CountLabel = styled.div`width: 96px; text-align: center; line-height: 24px; font-weight: 700; color: #111; background: #bcd6fa; border-right: 1px solid #2d5ba8;`;
const CountValue = styled.div`flex: 1; text-align: center; line-height: 24px; background: #fff;`;

const COLS = '70px 134px 200px 150px 200px 150px 120px 80px 80px 150px 120px 120px 70px';
const TableWrap = styled.div`display: flex; flex: none; height: 289px;`;
const Table = styled.div`flex: 1; min-width: 0; display: flex; flex-direction: column;`;
const HeadRow = styled.div`
  display: grid; grid-template-columns: ${COLS}; height: 25px; flex: none; background: #d7e4f1; border-bottom: 1px solid #c2cbd6; box-sizing: border-box;
`;
const HeadCell = styled.div<{ $right?: boolean }>`
  padding: 0 7px; text-align: ${p => (p.$right ? 'right' : 'left')}; line-height: 26px; font-size: 15px; color: #1c2533;
  border-right: 1px solid #bcc7d4; white-space: nowrap; overflow: hidden;
`;
const DataRow = styled.div<{ $sel?: boolean }>`
  display: grid; grid-template-columns: ${COLS}; height: 24px; flex: none; box-sizing: border-box; font-size: 15.5px;
  background: ${p => (p.$sel ? '#90b5e4' : '#fff')}; border-bottom: 1px solid ${p => (p.$sel ? '#6f9ed8' : '#c6ccd6')};
`;
const DataCell = styled.div<{ $right?: boolean; $link?: boolean; $han?: boolean }>`
  padding: 0 7px; text-align: ${p => (p.$right ? 'right' : 'left')}; line-height: 25px; white-space: nowrap; overflow: hidden;
  color: ${p => (p.$link ? '#1f80c0' : '#1b2230')}; border-right: 1px solid #c6ccd6; font-size: ${p => (p.$han ? '15px' : 'inherit')};
`;
const VScroll = styled.div<{ $w: number }>`
  width: ${p => p.$w}px; flex: none; display: flex; flex-direction: column; align-items: center; background: #f0f0f0; overflow: hidden;
`;
const ScrollThumbV = styled.div<{ $top: number; $h: number }>`
  width: 100%; height: ${p => p.$h}px; margin-top: ${p => p.$top}px; background: #cdcdcd; flex: none;
`;
const ScrollArrowWrap = styled.span`height: 20px; flex: none; display: flex; align-items: center; color: #505050;`;
const VSpacer = styled.div`flex: 1;`;
const HScroll = styled.div<{ $h: number }>`
  height: ${p => p.$h}px; flex: none; display: flex; align-items: center; background: #f0f0f0; color: #505050;
`;
const HThumb = styled.div<{ $w: number; $ml: number }>`
  height: 100%; width: ${p => p.$w}px; margin-left: ${p => p.$ml}px; background: #cdcdcd; flex: none;
`;
const HEnd = styled.span`margin-left: auto; display: flex; padding-right: 24px;`;
const HSplitter = styled.div`
  height: 6px; flex: none; background: #d8e4f4; border-top: 1px solid #5a6a7e; border-bottom: 3px solid #486f9f; box-sizing: border-box;
`;
const Detail = styled.div`
  height: 447px; flex: none; box-sizing: border-box; display: flex; border-top: 1px solid #f7ae5c; border-bottom: 1px solid #f7ae5c; background: #fff;
`;
const DetailLeft = styled.div`width: 833px; flex: none; display: flex; flex-direction: column; border-right: 1px solid #c0c4ca; box-sizing: content-box;`;
const DetailTop = styled.div`flex: 1; display: flex; min-height: 0;`;
const DetailList = styled.div`flex: 1; min-width: 0; overflow: hidden;`;
const DRow = styled.div`
  position: relative; height: 20.05px; display: flex; align-items: center; white-space: nowrap; overflow: hidden; flex: none;
  font-family: "Liberation Mono", "Noto Sans CJK SC", monospace; font-size: 14.8px;
`;
const DName = styled.div<{ $pad: number; $w: number }>`
  width: ${p => p.$w}px; padding-left: ${p => p.$pad}px; box-sizing: border-box; flex: none; color: #86860a; display: flex; align-items: center;
`;
const DNameText = styled.span`margin-top: -6px; white-space: nowrap;`;
const Han = styled.span`font-size: 18px; letter-spacing: 0;`;
const DTitle = styled.span`
  color: #0b3a9c; font-weight: 700; border-bottom: 2px solid #0b3a9c; line-height: 15px; height: 17px; white-space: nowrap;
  ${Han} { font-size: 19px; }
`;
const DValue = styled.div<{ $w: number }>`width: ${p => p.$w}px; flex: none; color: #222;`;
const DOffsetHead = styled(DValue)`padding-left: 1px; box-sizing: border-box;`;
const DExtra = styled.div`color: #8a8a8a;`;
const DIconSlot = styled.span<{ $w: number }>`width: ${p => p.$w}px; flex: none; display: flex; justify-content: center; align-items: center; margin-right: 3px;`;
const B = styled.span<{ $c: string }>`color: ${p => p.$c};`;
const HexPane = styled.div`flex: 1; min-width: 0; display: flex; margin-left: 2px; padding-top: 4px; border-left: 1px solid #c0c4ca; overflow: hidden;`;
const HexCol = styled.div<{ $w: number; $rule?: boolean; $pad: number }>`
  width: ${p => p.$w}px; flex: none; padding-left: ${p => p.$pad}px; box-sizing: border-box;
  ${p => p.$rule && 'border-left: 1px solid #101080;'}
  font-family: "Liberation Mono", monospace; font-size: 14.67px; line-height: 17px; color: #222; white-space: pre;
`;
const HexLine = styled.div<{ $sp?: number }>`height: 17px; letter-spacing: ${p => p.$sp ?? 0}px; position: relative; top: -3px;`;
const BottomTabs = styled.div`height: 26px; flex: none; background: #bfdbff; display: flex; position: relative; padding-left: 6px;`;
const RawTab = styled.div`
  position: relative; width: 105px; height: 25px; line-height: 23px; text-align: right; padding-right: 4px; box-sizing: border-box; font-weight: 700; font-size: 14.5px; color: #2a4a8c;
  background: linear-gradient(#ffeedd, #ffc27a); border: 1px solid #1f4f9a; border-top: 0; border-left: 0; border-radius: 0 0 4px 0;
  clip-path: polygon(0 0, 100% 0, 100% 100%, 20px 100%);
  &::before { content: ''; position: absolute; left: 9px; top: -4px; width: 2px; height: 33px; background: #1f4f9a; transform: rotate(-39deg); }
`;
const PageArrows = styled.div`margin-left: auto; display: flex; align-items: center; gap: 6px; padding-right: 5px; color: #2a4a8c;`;

/* ---------- status bar ---------- */
const StatusBar = styled.div`
  position: relative; height: 25px; flex: none; display: flex; align-items: center; font-size: 15px; color: #1d2d50; white-space: nowrap;
  background: linear-gradient(#deebfd 0, #cfe1fb 40%, #b4d1fa 42%, #a9cbf8 100%);
`;
const StatusCell = styled.div<{ $w: number; $pad?: number; $sp?: number }>`
  width: ${p => p.$w}px; flex: none; box-sizing: border-box; height: 100%; padding-left: ${p => p.$pad ?? 6}px;
  letter-spacing: ${p => p.$sp ?? 0}px;
  display: flex; align-items: center; gap: 2px; border-right: 1px solid #84a6d8; box-shadow: 1px 0 #e8f1fd; overflow: hidden;
`;
const StatusPlain = styled.div`flex: 1; padding-left: 6px; min-width: 0;`;
const StatusAlerts = styled.div`display: flex; align-items: center; width: 257px; flex: none; height: 100%;`;
const AlertCount = styled.span`width: 50px; display: flex; align-items: center; gap: 8px; flex: none;`;
const AlertName = styled.span`display: flex; align-items: center; gap: 2px; width: 107px; flex: none; border-right: 1px solid #f3f7fe; height: 100%;`;
const StopFilter = styled.span`margin-left: 7px; display: flex;`;
const Watermark = styled.div`
  position: absolute; left: 1664px; top: 0; font-size: 16px; line-height: 18px; color: rgba(255, 255, 255, 0.55); pointer-events: none; letter-spacing: -.1px;
`;

/* ---------- charts ---------- */
const Gauge = ({ title, labels }: { title: string; labels: [string, number][] }) => {
  const cx = 49, cy = 50, r = 33;
  const pt = (a: number, rr: number) => [cx - rr * Math.cos((a * Math.PI) / 180), cy - rr * Math.sin((a * Math.PI) / 180)];
  const arc = (a: number, b: number) => {
    const [x1, y1] = pt(a, r); const [x2, y2] = pt(b, r);
    return `M${x1} ${y1}A${r} ${r} 0 0 1 ${x2} ${y2}`;
  };
  return (
    <svg width="98" height="66" viewBox="0 0 98 66">
      <path d="M3 50A46 46 0 0 1 95 50Q97 60 84 59C72 59 66 66 49 66C32 66 26 59 14 59Q1 60 3 50Z" fill="#f1f1e6" stroke="#8ea4bb" strokeWidth="4" />
      <path d={arc(44, 136)} fill="none" stroke="#b8cde6" strokeWidth="5" />
      <path d={arc(0, 44)} fill="none" stroke="#3fb030" strokeWidth="3" />
      <path d={arc(136, 180)} fill="none" stroke="#e62a2a" strokeWidth="3" />
      {labels.map(([t, a]) => {
        const [x1, y1] = pt(a, r + 3); const [x2, y2] = pt(a, r - 3); const [tx, ty] = pt(a, r - 9);
        return (
          <g key={t}>
            <path d={`M${x1} ${y1}L${x2} ${y2}`} stroke="#333" strokeWidth="1.6" />
            <text x={tx} y={ty + 2} fontSize="7.5" fill="#6a7a90" textAnchor="middle" fontFamily="Liberation Sans">{t}</text>
          </g>
        );
      })}
      <text x={cx} y={40} fontSize="8" fill="#8ea0ba" textAnchor="middle" fontFamily="Liberation Sans">{title}</text>
      <rect x="19" y="50" width="28" height="3" fill="#eebf56" />
      <circle cx="49" cy="51" r="5.5" fill="url(#gKnob)" />
    </svg>
  );
};

const spike = (x: number, a: number, b: number, y: number) => (x >= a && x <= b ? y : null);
const chartPoints = (() => {
  const pts: number[][] = [];
  for (let x = 0; x <= 220; x += 1) {
    const n = Math.sin(x * 1.7) * 2.4 + Math.sin(x * 0.63 + 1) * 2.6 + Math.sin(x * 3.3) * 1.6;
    let y = 46 + n;
    y = spike(x, 26, 36, 61) ?? y;
    y = spike(x, 38, 42, 11 + n / 2) ?? y;
    y = spike(x, 43, 52, 40 + n * 1.2) ?? y;
    y = spike(x, 60, 66, 38 + n) ?? y;
    y = spike(x, 66, 72, 9 + n) ?? y;
    y = spike(x, 95, 97, 19) ?? y;
    y = spike(x, 108, 110, 12) ?? y;
    pts.push([x, y]);
  }
  return pts;
})();
const TrendChart = () => {
  const line = chartPoints.map(p => p.join(',')).join(' ');
  const v: number[] = [];
  for (let x = 3; x < 220; x += 11) v.push(x);
  return (
    <svg width="220" height="66" viewBox="0 0 220 66">
      <rect width="220" height="66" fill="#000" />
      <polygon points={`0,66 ${line} 220,66`} fill="#1f5f1f" />
      <path d={v.map(x => `M${x} 0V66`).join('') + 'M0 10H220M0 30H220M0 50H220'} stroke="#2a8050" strokeWidth="1" />
      <polyline points={line} fill="none" stroke="#0ee60e" strokeWidth="1" />
      <rect width="220" height="1" fill="#7a7a7a" />
    </svg>
  );
};

/* ---------- data ---------- */
const HEADERS: [string, boolean][] = [['编号', true], ['绝对时间', true], ['源', false], ['源地理位置', false], ['目标', false], ['目标地理位置', false], ['协议', false], ['大小', true], ['负载', true], ['进程', false], ['应用', false], ['客户端', false], ['解码字段', false]];
const A = '125.39.240.34:443', C = '192.168.3.13:36473';
const RAW: [string, string, 0 | 1, string, string, string][] = [
  ['407154', '09:41:09.2843...', 0, 'MOBILE_QQ', '405', '351'],
  ['407155', '09:41:09.2844...', 0, 'MOBILE_QQ', '405', '351'],
  ['407160', '09:41:09.2938...', 1, 'TCP', '60', '0'],
  ['407161', '09:41:09.2938...', 1, 'TCP', '60', '0'],
  ['408460', '09:41:10.8441...', 0, 'MOBILE_QQ', '389', '335'],
  ['408461', '09:41:10.8441...', 0, 'MOBILE_QQ', '389', '335'],
  ['408470', '09:41:10.8568...', 1, 'TCP', '60', '0'],
  ['408471', '09:41:10.8568...', 1, 'TCP', '60', '0'],
  ['408656', '09:41:11.2045...', 0, 'MOBILE_QQ', '997', '943'],
  ['408657', '09:41:11.2046...', 0, 'MOBILE_QQ', '997', '943'],
  ['408670', '09:41:11.2235...', 1, 'TCP', '60', '0'],
];

const Han2 = ({ t }: { t: string }) => (
  <>
    {t.split(/([\u4e00-\u9fff]+)/).map((p, i) => (i % 2 ? <Han key={i}>{p}</Han> : <React.Fragment key={i}>{p}</React.Fragment>))}
  </>
);
const Off = ({ t }: { t: string }) => {
  const m = t.match(/\[(\d+)\/(\d+)\]/);
  if (!m) return <>{t}</>;
  return (
    <>
      <B $c="#3f9a6a">[</B><B $c="#6a6ab4">{m[1]}</B><B $c="#66a866">/</B><B $c="#e4664a">{m[2]}</B><B $c="#3f9a6a">]</B>
    </>
  );
};

type DR = { l: 0 | 1 | 2; t: string; icon?: React.ReactNode; v?: string; o?: string; vw?: number; open?: boolean; rails: [number, ('top' | 'bottom')?][]; hook?: [number, number] };
const L1 = (t: string, icon: React.ReactNode, v: string, o: string, last?: boolean): DR => ({
  l: 1, t, icon, v, o, rails: [[13], last ? [33, 'top'] : [33]], hook: [33, 10],
});
const L2 = (t: string, icon: React.ReactNode, v: string, o: string, last?: boolean): DR => ({
  l: 2, t, icon, v, o, rails: [[13], [33], last ? [51, 'top'] : [51]], hook: [51, 11],
});
const DETAIL: DR[] = [
  { l: 0, t: '互联网协议[Internet Protocol]', icon: <TreeTIcon />, o: '[14/20]', open: true, rails: [[13, 'bottom'], [33, 'bottom']] },
  L1('版本[Version]', <DocCoinIcon />, '4', '[14/1]'),
  L1('头部长度[Internet Header Length]', <DocCoinIcon />, '5', '(20)\u00a0\u00a0[14/1]'),
  { ...L1('区分服务字段[Differentiated Services Field]', <DocCoinIcon />, '', ''), o: '[14/0]', open: true },
  L2('区分服务码点[Differentiated Services Codepoint]', <DocCoinIcon />, '0000 00..', '(默认)'),
  L2('显示拥塞通告[Explicit Congestion Notification]', <DocCoinIcon />, '.... ..00', '(不带ECN)', true),
  L1('总长度[Total Length]', <CoinStackIcon />, '40', '[16/2]'),
  L1('标识[Identification]', <CoinStackIcon />, '54876', '[18/2]'),
  { ...L1('分段标志[Fragment Flags]', <GoldCoinIcon />, '', ''), o: '[20/1]', open: true },
  L2('保留[Reserved]', <BitIcon />, '0... ....', '[20/1]'),
  L2('分段[Fragment]', <BitIcon on />, '.1.. ....', '(不分段)'),
  L2('更多分段[More Fragment]', <BitIcon />, '..0. ....', '(最后一个分段)', true),
  L1('分段偏移[Fragment Offset]', <CoinStackIcon />, '...0 0000 0000 0000', '[20/2]'),
  L1('存活时间[Time to Live]', <GoldCoinIcon />, '64', '[22/1]'),
  L1('协议[Protocol]', <GoldCoinIcon />, '6', '(TCP)'),
  L1('校验和[Checksum]', <CoinStackIcon />, '0x3374', '[24/2]'),
  L1('源地址[Source Address]', <AddrIcon />, '192.168.3.13', '[26/4]'),
  L1('目的地址[Destination Address]', <AddrIcon />, '125.39.240.34', '[30/4]', true),
  { l: 0, t: 'TCP - 传输控制协议[TCP - Transmission Control Protocol]', icon: <TreeTIcon />, o: '[34/20]', open: true, rails: [[13, 'top'], [33, 'bottom']] },
  { ...L1('源端口[Source port]', <CoinStackIcon />, '36473', '[34/2]'), rails: [[33]], vw: 119 },
  { ...L1('目的端口[Destination Port]', <CoinStackIcon />, '443', '[36/2]'), rails: [[33]], vw: 119 },
  { ...L1('序列号[Sequence Number]', <GoldCoinIcon />, '', ''), rails: [[33]] },
];

type TR = { text: string; pad: number; iconW: number; icon: React.ReactNode; exp?: [number, boolean]; rails: [number, ('top' | 'bottom')?][]; hook?: [number, number]; sel?: boolean };
const T1 = (text: string, icon: React.ReactNode, open?: boolean, hasExp = true): TR => ({
  text, pad: 26, iconW: 21, icon, exp: hasExp ? [12, !!open] : undefined, rails: [[12]], hook: [12, 13],
});
const T2 = (text: string, icon: React.ReactNode, last?: boolean): TR => ({
  text, pad: 44, iconW: 33, icon, rails: [[12], last ? [30, 'top'] : [30]], hook: [30, 13],
});
const TREE: TR[] = [
  { text: '全面分析', pad: 4, iconW: 21, icon: <RootIcon />, rails: [[12, 'bottom']] },
  T1('协议浏览器 (2)', <ProtoTreeIcon />),
  T1('物理浏览器 (3)', <PhysTreeIcon />),
  T1('IP浏览器 (5)', <IPTreeIcon />),
  T1('VoIP浏览器', <VoipTreeIcon />, false, false),
  T1('进程浏览器', <ProcTreeIcon />, false, false),
  { ...T1('应用浏览器 (13)', <AppRootIcon />, true), rails: [[12], [30, 'bottom']] },
  T2('酷狗音乐', <AppNodeIcon faded />),
  T2('QQ', <AppNodeIcon />),
  T2('360影视', <AppNodeIcon faded />),
  T2('ApplePushService', <AppNodeIcon />),
  T2('爱奇艺', <AppNodeIcon faded />),
  T2('NetBIOS', <AppNodeIcon />),
  T2('NTP', <AppNodeIcon />),
  T2('Mobile QQ', <AppNodeIcon />),
  T2('DNS', <AppNodeIcon />),
  T2('ICMP', <AppNodeIcon purple />),
  T2('DHCP', <AppNodeIcon purple />),
  T2('ARP', <AppNodeIcon purple green />),
  T2('WEB', <AppNodeIcon purple green />, true),
  { ...T1('客户端浏览器 (1)', <ClientTreeIcon />, true), rails: [[12, 'top'], [30, 'bottom']] },
  { text: 'IM (1)', pad: 44, iconW: 33, icon: <IMTreeIcon />, exp: [30, false], rails: [[30, 'top']], hook: [30, 13], sel: true },
];

const TABS: [string, number][] = [['协议', 45], ['物理端点', 73], ['IP端点', 55], ['物理会话', 73], ['IP会话', 57], ['TCP会话', 70], ['UDP会话', 75], ['客户端', 58], ['矩阵', 43]];

const RibbonItemV = ({ w, icon, text, off }: { w: number; icon: React.ReactNode; text: string; off?: boolean }) => (
  <RItem $w={w}>{icon}<RText $off={off}>{text}</RText></RItem>
);

const Dot = () => <svg width="11" height="15" viewBox="0 0 11 15"><ellipse cx="5.5" cy="7.5" rx="5.2" ry="6.5" fill="url(#gCoin)" stroke="#c08a10" /></svg>;

const HEX_ASCII = ['....AD.qt`8...E..(.', `\\@.@.3t....}'.".y..`, '....<.].P.."......'];
const HEX_BYTES = [
  'AC A0 16 83 41 44 A4 71 74 60 38 92 08 00 45 00 00 28 D6',
  '5C 40 00 40 06 33 74 C0 A8 03 0D 7D 27 F0 22 8E 79 01 BB',
  '94 ED B8 A9 3C EF 5D F0 50 10 0C 22 FA 07 00 00 00 00 20',
  '20 20 20',
];

export default function App() {
  return (
    <Frame>
      <GlobalStyle />
      <SharedDefs />
      <TitleBar>
        <QuickBar>
          <svg width="20" height="24" viewBox="0 0 20 24"><path d="M3 1h10l5 5v16H3z" fill="#f7f9fc" stroke="#555" /><path d="M13 1v5h5" fill="#dfe3ea" stroke="#555" /></svg>
          <svg width="20" height="25" viewBox="0 0 20 25"><rect x="1" y="2" width="16" height="21" fill="#c89060" stroke="#7a4a20" /><rect x="3" y="5" width="12" height="16" fill="#f4f4f4" /><rect x="6" y="0" width="6" height="4" fill="#999" /><circle cx="12" cy="18" r="5" fill="#7fa8d8" stroke="#445" /></svg>
          <svg width="24" height="24" viewBox="0 0 24 24"><path d="M1 7h8l2 2h10v13H1z" fill="url(#gFolder)" stroke="#6a5a30" /><path d="M17 7l4-4" stroke="#444" strokeWidth="1.6" /></svg>
          <svg width="21" height="24" viewBox="0 0 21 24"><rect x="0" y="1" width="21" height="22" fill="#5a5ac4" stroke="#2a2a7a" /><rect x="4" y="2" width="13" height="10" fill="#eef0fb" /><rect x="6" y="15" width="9" height="8" fill="#dcdce8" /><rect x="8" y="17" width="3" height="5" fill="#333" /></svg>
        </QuickBar>
        <TitleText>分析工程 2 - 科来网络分析系统 11 技术交流版</TitleText>
        <WinButtons>
          <svg width="12" height="14" viewBox="0 0 12 14"><path d="M0 7.5H12" stroke="#111" /></svg>
          <svg width="14" height="14" viewBox="0 0 14 14"><rect x=".5" y="3.5" width="10" height="10" fill="none" stroke="#111" /><path d="M3.5 3.5V.5H13.5V10.5H10.5" fill="none" stroke="#111" /></svg>
          <svg width="14" height="14" viewBox="0 0 14 14"><path d="M1 1L13 13M13 1L1 13" stroke="#111" /></svg>
        </WinButtons>
      </TitleBar>
      <LogoWrap>
        <svg width="48" height="48" viewBox="0 0 48 48">
          <circle cx="24" cy="24" r="23" fill="#e8eef6" stroke="#9fb0c4" />
          <circle cx="24" cy="23" r="19" fill="url(#gLogo)" />
          <path d="M11 21Q24 8 37 19Q26 14 17 22Q26 32 37 25Q26 38 13 28Q22 24 11 21Z" fill="#fff" opacity=".92" />
        </svg>
      </LogoWrap>
      <MenuBar>
        <MenuTab $active>分析</MenuTab>
        <MenuTab>系统</MenuTab>
        <MenuTab>工具</MenuTab>
        <MenuTab>视图</MenuTab>
        <HelpBox>
          <svg width="24" height="24" viewBox="0 0 24 24"><circle cx="12" cy="12" r="11" fill="url(#gKnob)" stroke="#b8c6d8" strokeWidth="1.5" /><path d="M8 9a4 4 0 1 1 6 3.5c-1.5 1-2 1.5-2 3M12 17.5v2.5" stroke="#fff" strokeWidth="2.4" fill="none" /></svg>
          帮助<Caret />
        </HelpBox>
      </MenuBar>
      <Ribbon>
        <RGroup $w={269}>
          <RBody>
            <RibbonItemV w={85} icon={<FolderGearIcon />} text="数据包文件" />
            <RSep />
            <RibbonItemV w={60} icon={<PlayIcon />} text="开始" />
            <RibbonItemV w={60} icon={<PauseIcon />} text="暂停" off />
            <RibbonItemV w={60} icon={<StopIcon />} text="停止" off />
          </RBody>
          <RLabel>导入</RLabel>
        </RGroup>
        <RGroup $w={248}>
          <RBody>
            <RibbonItemV w={63} icon={<GeneralIcon />} text="常规" />
            <RibbonItemV w={60} icon={<NodeGroupIcon />} text="节点分组" />
            <RibbonItemV w={64} icon={<NameTableIcon />} text="名字表" />
            <RibbonItemV w={54} icon={<WarnIcon />} text="警报" />
          </RBody>
          <RLabel>网络档案设置</RLabel>
        </RGroup>
        <RGroup $w={696}>
          <RBody>
            <RibbonItemV w={69} icon={<AnalyzeIcon />} text="分析对象" />
            <RibbonItemV w={54} icon={<DiagnoseIcon />} text="诊断" />
            <RibbonItemV w={70} icon={<ViewIcon />} text="视图显示" />
            <RSep />
            <RibbonItemV w={112} icon={<BeakerIcon />} text="数据包显示缓存" />
            <RibbonItemV w={58} icon={<FunnelIcon />} text="过滤器" />
            <RibbonItemV w={82} icon={<BeakerIcon save />} text="数据包保存" />
            <RSep />
            <RibbonItemV w={81} icon={<SessionIcon />} text="会话筛选器" />
            <RSep />
            <RibbonItemV w={60} icon={<LogIcon />} text="日志" />
            <RibbonItemV w={96} icon={<LogSaveIcon />} text="日志文件保存" />
          </RBody>
          <RLabel>分析方案设置</RLabel>
        </RGroup>
        <RGroup $w={104}>
          <RBody>
            <GaugeBox><Gauge title="Utilization" labels={[['0', 4], ['20', 40], ['40', 72], ['60', 108], ['80', 140], ['100', 176]]} /></GaugeBox>
          </RBody>
          <RLabel>利用率 (0%)</RLabel>
        </RGroup>
        <RGroup $w={118}>
          <RBody>
            <GaugeBox><Gauge title="Packet/s" labels={[['0', 4], ['10K', 44], ['50K', 90], ['100K', 136], ['200K', 176]]} /></GaugeBox>
          </RBody>
          <RLabel>每秒数据包 (610)</RLabel>
        </RGroup>
        <RGroup $w={227}>
          <RBody><ChartBox><TrendChart /></ChartBox></RBody>
          <RLabel>流量超势图 &nbsp;(位)</RLabel>
        </RGroup>
        <RGroup $w={193}>
          <RBody>
            <BufferBody>
              <BufferMap><BufferPct>100%</BufferPct></BufferMap>
              <SideBtns>
                <SideBtn><ExportIcon v="export" />导出</SideBtn>
                <SideBtn><ExportIcon v="clear" />清空</SideBtn>
                <SideBtn><ExportIcon v="lock" />锁定</SideBtn>
              </SideBtns>
            </BufferBody>
          </RBody>
          <RLabel>数据包缓存 (128.0 MB)</RLabel>
        </RGroup>
      </Ribbon>
      <Body>
        <LeftPane>
          <PaneHead>节点浏览器</PaneHead>
          <PaneTools>
            <TableAddIcon /><FilterAddIcon /><PieAddIcon /><WarnAddIcon /><ReportAddIcon />
          </PaneTools>
          <Tree>
            {TREE.map(r => (
              <TreeRow key={r.text} $pad={r.pad}>
                {r.rails.map(([x, part], i) => <Rail key={i} $x={x} $part={part} />)}
                {r.hook && <Hook $x={r.hook[0]} $w={r.hook[1]} />}
                {r.exp && <Expander $x={r.exp[0]} $open={r.exp[1]} />}
                {r.sel ? (
                  <TreeSelected><TreeIconSlot $w={r.iconW}>{r.icon}</TreeIconSlot>{r.text}</TreeSelected>
                ) : (
                  <><TreeIconSlot $w={r.iconW}>{r.icon}</TreeIconSlot>{r.text}</>
                )}
              </TreeRow>
            ))}
          </Tree>
        </LeftPane>
        <VSplit />
        <RightPane>
          <TabStrip>
            <ViewTab $w={60} $slant>概要</ViewTab>
            {TABS.map(([t, w]) => <ViewTab key={t} $w={w}>{t}</ViewTab>)}
            <ViewTab $w={92} $slant $active>数据包<TabClose>×</TabClose></ViewTab>
            <ViewTab $w={43}>日志</ViewTab>
            <StripEnd><PanelIcon /></StripEnd>
          </TabStrip>
          <Panel>
            <Toolbar>
              <Tool $ml={7}><SaveMenuIcon /><ToolCaret /></Tool>
              <ToolSep $ml={2} />
              <Tool $ml={7}><ArrowLeftIcon /></Tool>
              <Tool $ml={7}><ArrowRightIcon /></Tool>
              <ToolSep $ml={4} />
              <OrangeGroup><ListViewIcon /><DetailViewIcon /><HexViewIcon /></OrangeGroup>
              <ToolSep $ml={3} />
              <Tool $ml={5}><SwapIcon /></Tool>
              <Tool $ml={4}><ToolCaret /></Tool>
              <Tool $ml={6}><FilterBlueIcon /><ToolCaret /></Tool>
              <ToolSep $ml={1} />
              <Tool $ml={1}><LangIcon /></Tool>
              <Tool $ml={5}><ToolCaret /></Tool>
              <ToolSep $ml={3} />
              <Tool $ml={6}><LockIcon /></Tool>
              <ToolSep $ml={1} />
              <FilterLabel>过滤:</FilterLabel>
              <Combo $w={259}><ComboText /><ComboBtn><ComboCaret /></ComboBtn></Combo>
              <Combo $w={178}><ComboText>全部</ComboText><ComboBtn><ComboCaret /></ComboBtn></Combo>
              <CheckBox />
              <WordLabel>全字匹配</WordLabel>
              <Tool $ml={6}><SearchIcon /></Tool>
              <Tool $ml={7}><FilterBoltIcon /></Tool>
              <Tool $ml={4}><FilterOffIcon /></Tool>
              <CountBox><CountLabel>IM\数据包:</CountLabel><CountValue>44</CountValue></CountBox>
            </Toolbar>
            <TableWrap>
              <Table>
                <HeadRow>
                  {HEADERS.map(([t, r]) => <HeadCell key={t} $right={r}>{t}</HeadCell>)}
                </HeadRow>
                {RAW.map((r, i) => {
                  const [src, dst] = r[2] === 0 ? [A, C] : [C, A];
                  const [g1, g2] = r[2] === 0 ? ['中国', '本地'] : ['本地', '中国'];
                  return (
                    <DataRow key={r[0]} $sel={i === 10}>
                      <DataCell $right>{r[0]}</DataCell>
                      <DataCell $right>{r[1]}</DataCell>
                      <DataCell>{src}</DataCell>
                      <DataCell $han>{g1}</DataCell>
                      <DataCell>{dst}</DataCell>
                      <DataCell $han>{g2}</DataCell>
                      <DataCell $link>{r[3]}</DataCell>
                      <DataCell $right>{r[4]}</DataCell>
                      <DataCell $right>{r[5]}</DataCell>
                      <DataCell />
                      <DataCell>Mobile QQ</DataCell>
                      <DataCell>QQ</DataCell>
                      <DataCell />
                    </DataRow>
                  );
                })}
              </Table>
              <VScroll $w={21}>
                <ScrollArrowWrap><ChevronUp size={16} /></ScrollArrowWrap>
                <ScrollThumbV $top={6} $h={56} />
                <VSpacer />
                <ScrollArrowWrap><ChevronDown size={16} /></ScrollArrowWrap>
              </VScroll>
            </TableWrap>
            <HScroll $h={22}>
              <ChevronLeft size={16} />
              <HThumb $w={1334} $ml={4} />
              <HEnd><ChevronRight size={16} /></HEnd>
            </HScroll>
            <HSplitter />
            <Detail>
              <DetailLeft>
                <DetailTop>
                  <DetailList>
                    {DETAIL.map((d, i) => {
                      const pad = d.l === 0 ? 24 : d.l === 1 ? 43 : 63;
                      return (
                        <DRow key={i}>
                          {d.rails.map(([x, part], j) => <Rail key={j} $x={x} $part={part} />)}
                          {d.hook && <Hook $x={d.hook[0]} $w={d.hook[1]} />}
                          {d.open && <Expander $x={d.l === 0 ? 13 : 33} $open />}
                          <DName $pad={pad} $w={554}>
                            <DIconSlot $w={16}>{d.icon}</DIconSlot>
                            {d.l === 0 ? <DTitle><Han2 t={d.t} /></DTitle> : <DNameText><Han2 t={d.t} /></DNameText>}
                          </DName>
                          {d.l === 0 || !d.v ? (
                            <DOffsetHead $w={200}><Off t={d.o || ''} /></DOffsetHead>
                          ) : (
                            <>
                              <DValue $w={d.vw ?? 200}>{d.v}</DValue>
                              <DExtra>{/^\[/.test(d.o || '') ? <Off t={d.o!} /> : <Han2 t={d.o || ''} />}</DExtra>
                            </>
                          )}
                        </DRow>
                      );
                    })}
                  </DetailList>
                  <VScroll $w={19}>
                    <ScrollArrowWrap><ChevronUp size={14} /></ScrollArrowWrap>
                    <ScrollThumbV $top={72} $h={169} />
                    <VSpacer />
                    <ScrollArrowWrap><ChevronDown size={14} /></ScrollArrowWrap>
                  </VScroll>
                </DetailTop>
                <HScroll $h={19}>
                  <ChevronLeft size={16} />
                  <HThumb $w={473} $ml={6} />
                  <HEnd><ChevronRight size={16} /></HEnd>
                </HScroll>
              </DetailLeft>
              <HexPane>
                <HexCol $w={84} $pad={3}>
                  {['00000000', '00000013', '00000026', '00000039'].map(t => <HexLine key={t}>{t}</HexLine>)}
                </HexCol>
                <HexCol $w={532} $rule $pad={7}>
                  {HEX_BYTES.map(t => <HexLine key={t} $sp={0.19}>{t}</HexLine>)}
                </HexCol>
                <HexCol $w={200} $rule $pad={9}>
                  {HEX_ASCII.map(t => <HexLine key={t}>{t}</HexLine>)}
                </HexCol>
              </HexPane>
            </Detail>
            <BottomTabs>
              <RawTab>原始数据包</RawTab>
              <PageArrows>
                <svg width="6" height="12" viewBox="0 0 6 12"><path d="M5 1L1 6l4 5z" fill="none" stroke="#2a4a8c" /></svg>
                <svg width="6" height="12" viewBox="0 0 6 12"><path d="M1 1l4 5-4 5z" fill="none" stroke="#2a4a8c" /></svg>
              </PageArrows>
            </BottomTabs>
          </Panel>
        </RightPane>
      </Body>
      <StatusBar>
        <StatusCell $w={176} $pad={8} $sp={0.6}>
          <svg width="17" height="18" viewBox="0 0 17 18"><rect x="1" y="1" width="12" height="15" fill="#eef2f8" stroke="#4a6a9a" /><path d="M3 5h8M3 8h8M3 11h6" stroke="#4a6fb0" /><path d="M7 16L15 7l2 2-8 8z" fill="#e8a820" /></svg>
          回放分析 - 全面分析
        </StatusCell>
        <StatusCell $w={242} $pad={10}>
          <svg width="18" height="18" viewBox="0 0 18 18"><rect x="4" y="1" width="12" height="9" fill="#d8dde4" stroke="#444" /><rect x="1" y="9" width="15" height="7" fill="#eef0f3" stroke="#444" /><path d="M3 13h11" stroke="#444" /></svg>
          网络档案 1 - 带宽 - 1000Mbps
        </StatusCell>
        <StatusCell $w={178} $pad={10}>
          <svg width="17" height="18" viewBox="0 0 17 18"><path d="M1 3h6l2 2h6v12H1z" fill="url(#gFolder)" stroke="#b08a30" /><circle cx="11" cy="13" r="3.5" fill="#9ccf60" /></svg>
          共1文件, 已停止回放
        </StatusCell>
        <StatusCell $w={202} $pad={9}>
          <svg width="16" height="18" viewBox="0 0 16 18"><path d="M0 1H15L9 8V17H6V8Z" fill="url(#gFunnel)" stroke="#7a7a7a" /></svg>
          <span>接受: 0, 排除: 1 &nbsp;00:00:08</span>
        </StatusCell>
        <StatusCell $w={119} $pad={9}>
          <svg width="17" height="20" viewBox="0 0 17 20"><path d="M0 1H15L9 8V14H6V8Z" fill="url(#gFunnel)" stroke="#7a7a7a" /><path d="M3 12l4 6L16 6" fill="none" stroke="#3aaa2a" strokeWidth="2.4" /></svg>
          543,683
          <StopFilter><svg width="16" height="19" viewBox="0 0 16 19"><path d="M0 1H15L9 8H6Z" fill="url(#gFunnel)" stroke="#7a7a7a" /><circle cx="8" cy="12" r="5" fill="#fff" stroke="#e02a1a" strokeWidth="2" /><path d="M5 15l6-6" stroke="#e02a1a" strokeWidth="2" /></svg></StopFilter>
          0
        </StatusCell>
        <StatusPlain>就绪</StatusPlain>
        <StatusAlerts>
          <AlertName>
            <svg width="16" height="18" viewBox="0 0 16 18"><path d="M8 1L15 16H1Z" fill="url(#gWarn)" stroke="#b08a10" /><path d="M7.3 6h1.4l-.2 5h-1zM7.3 12.5h1.4V14H7.3z" fill="#222" /></svg>
            警报浏览器
          </AlertName>
          <AlertCount><Dot />0</AlertCount>
          <AlertCount><Dot />0</AlertCount>
          <AlertCount><Dot />0</AlertCount>
        </StatusAlerts>
        <Watermark>https://blog.csdn.net/qq_34844644</Watermark>
      </StatusBar>
    </Frame>
  );
}
